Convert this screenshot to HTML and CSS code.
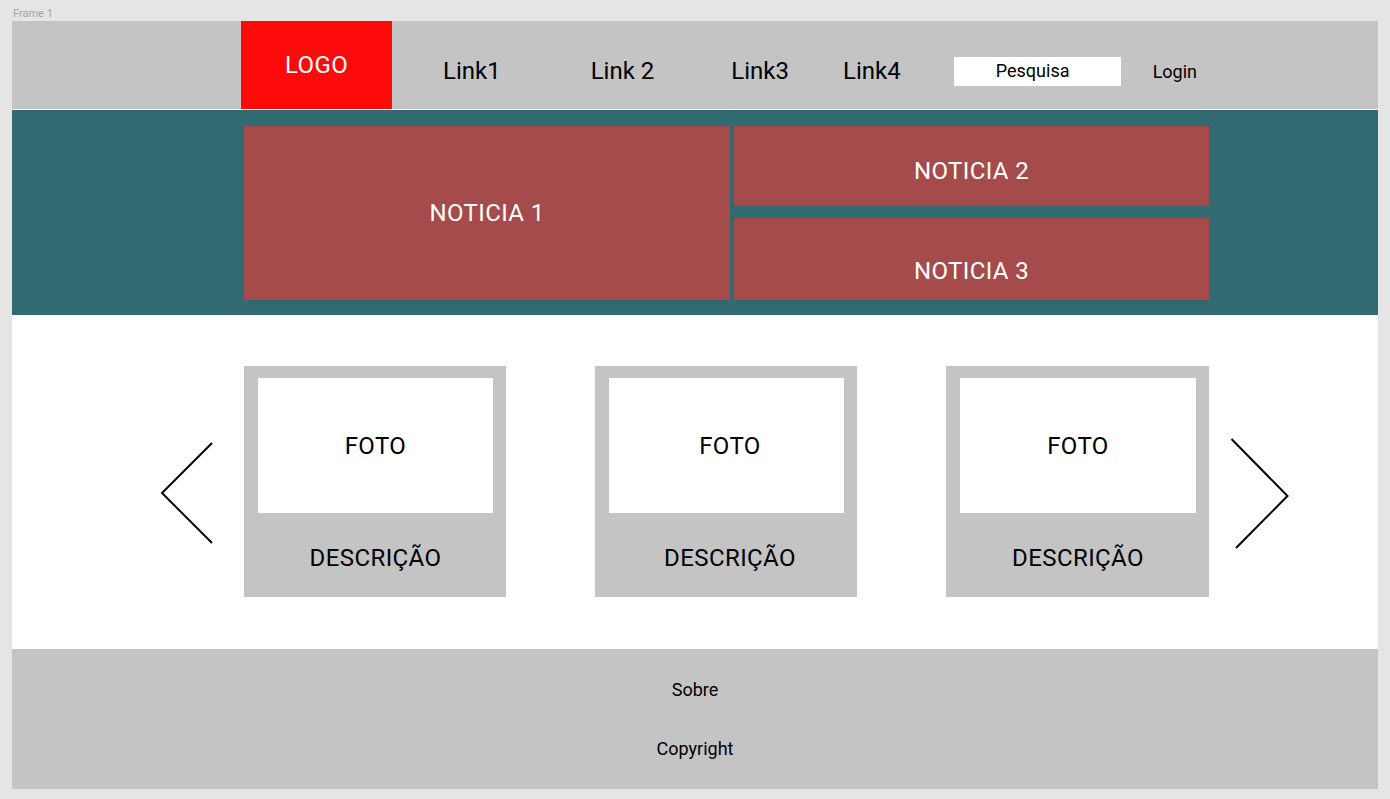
FILE: index.html
```html
<!DOCTYPE html>
<html lang="pt">
<head>
<meta charset="utf-8">
<title>Frame 1</title>
<link rel="stylesheet" href="styles.css">
</head>
<body>
<div class="label">Frame 1</div>
<div class="frame">
  <header class="header">
    <div class="logo">LOGO</div>
    <nav class="nav">
      <a class="link link-1">Link1</a>
      <a class="link link-2">Link 2</a>
      <a class="link link-3">Link3</a>
      <a class="link link-4">Link4</a>
      <div class="search">Pesquisa</div>
      <a class="login">Login</a>
    </nav>
  </header>
  <section class="news">
    <div class="news-grid">
      <div class="noticia n1">NOTICIA 1</div>
      <div class="noticia n2">NOTICIA 2</div>
      <div class="noticia n3">NOTICIA 3</div>
    </div>
  </section>
  <section class="carousel">
    <svg class="arrow arrow-left" width="84" height="231" viewBox="0 0 84 231">
      <polyline points="52,77 2,127 52,177" fill="none" stroke="#000" stroke-width="2"/>
    </svg>
    <div class="cards">
      <div class="card">
        <div class="photo">FOTO</div>
        <div class="desc">DESCRIÇÃO</div>
      </div>
      <div class="card card-mid">
        <div class="photo">FOTO</div>
        <div class="desc">DESCRIÇÃO</div>
      </div>
      <div class="card card-last">
        <div class="photo">FOTO</div>
        <div class="desc">DESCRIÇÃO</div>
      </div>
    </div>
    <svg class="arrow arrow-right" width="90" height="231" viewBox="0 0 90 231">
      <polyline points="22.5,73 78.5,130 27,182" fill="none" stroke="#000" stroke-width="2"/>
    </svg>
  </section>
  <footer class="footer">
    <div class="foot-item">Sobre</div>
    <div class="foot-item">Copyright</div>
  </footer>
</div>
</body>
</html>
```

FILE: styles.css
```css
* { box-sizing: border-box; }

html, body {
  margin: 0;
  padding: 0;
}

body {
  background: #e5e5e5;
  font-family: Roboto, "Liberation Sans", Arial, sans-serif;
  color: #000;
  width: 1390px;
  height: 799px;
  overflow: hidden;
}

.label {
  height: 21px;
  padding: 7px 0 0 13px;
  font-size: 11px;
  line-height: 13px;
  color: #a3a3a3;
}

.frame {
  margin-left: 12px;
  width: 1366px;
  height: 768px;
  background: #ffffff;
}

/* Header */
.header {
  height: 88px;
  background: #c4c4c4;
  display: flex;
  padding-left: 229px;
}

.logo {
  width: 151px;
  height: 88px;
  background: #fe0a0a;
  color: #fff;
  font-size: 24px;
  letter-spacing: 0.4px;
  display: flex;
  align-items: center;
  justify-content: center;
  padding-bottom: 1px;
}

.nav {
  display: flex;
  align-items: center;
  padding-top: 12px;
}

.link {
  font-size: 24px;
  line-height: 28px;
  color: #000;
}

.link-1 { margin-left: 51px; }
.link-2 { margin-left: 90px; }
.link-3 { margin-left: 77px; }
.link-4 { margin-left: 54px; }

.search {
  margin-left: 53px;
  width: 167px;
  height: 29px;
  background: #fff;
  font-size: 18px;
  display: flex;
  align-items: center;
  justify-content: center;
  padding-right: 9px;
  padding-bottom: 2px;
}

.login {
  margin-left: 32px;
  font-size: 18px;
  line-height: 21px;
}

/* News */
.news {
  margin-top: 1px;
  height: 205px;
  background: #316a71;
  padding: 16px 0 0 232px;
}

.news-grid {
  display: grid;
  grid-template-columns: 486px 475px;
  grid-template-rows: 80px 82px;
  column-gap: 4px;
  row-gap: 12px;
}

.noticia {
  background: #a64b4b;
  color: #fff;
  font-size: 24px;
  letter-spacing: 0.4px;
  display: flex;
  align-items: center;
  justify-content: center;
}

.n1 { grid-row: 1 / 3; }
.n2 { padding-top: 10px; }
.n3 { padding-top: 24px; }

/* Carousel */
.carousel {
  height: 334px;
  padding: 51px 0 0 148px;
  display: flex;
  align-items: flex-start;
}

.arrow { display: block; flex: none; }

.cards {
  display: flex;
  gap: 89px;
}

.card {
  width: 262px;
  height: 231px;
  background: #c4c4c4;
  padding: 12px 13px 0 14px;
}

.card-last { width: 263px; }

.photo {
  height: 135px;
  background: #fff;
  font-size: 24px;
  letter-spacing: 0.4px;
  display: flex;
  align-items: center;
  justify-content: center;
}

.desc {
  height: 84px;
  padding-top: 6px;
  font-size: 24px;
  letter-spacing: 0.4px;
  display: flex;
  align-items: center;
  justify-content: center;
}

.card-mid .photo,
.card-mid .desc { padding-left: 7px; }

/* Footer */
.footer {
  height: 140px;
  background: #c4c4c4;
  padding-top: 30px;
  display: flex;
  flex-direction: column;
  align-items: center;
  gap: 38px;
}

.foot-item {
  font-size: 18px;
  line-height: 21px;
}
```
